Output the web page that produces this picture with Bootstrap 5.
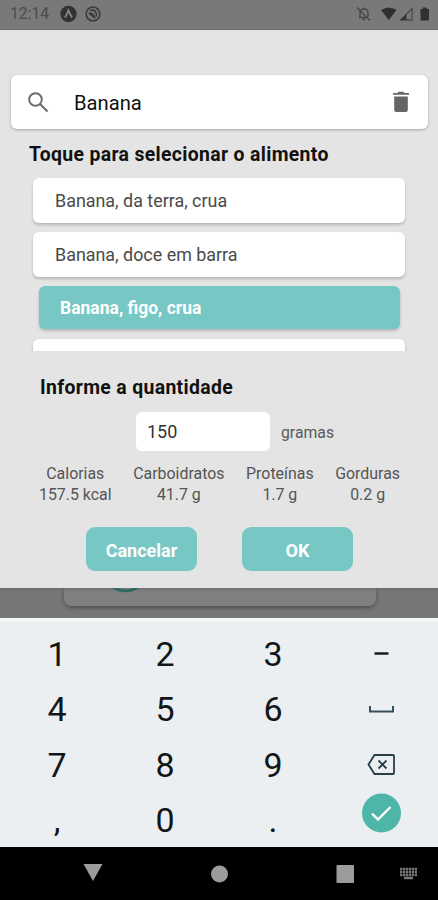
<!DOCTYPE html>
<html lang="pt-BR">
<head>
<meta charset="utf-8">
<meta name="viewport" content="width=device-width, initial-scale=1">
<title>Selecionar alimento</title>
<link href="https://cdn.jsdelivr.net/npm/bootstrap@5.3.0/dist/css/bootstrap.min.css" rel="stylesheet">
<style>
body{font-family:Roboto,sans-serif;color:#111;background:#777;width:438px;height:900px;overflow:hidden}
svg{display:block;flex:none}
.statusbar{height:30px;background:#797979;color:#4c4c4c;font-size:15.7px;padding:1px 6px 2px 10px;border-bottom:1px solid #707070}
.sheet{height:558px;background:#e4e4e4;padding-top:45px}
.search-box{height:54px;margin:0 10px 0 11px;border-radius:6px;background:#fff;box-shadow:0 1px 3px rgba(0,0,0,.28);padding:0 17px 0 16px}
.search-box input{font-size:20.2px;line-height:24px;height:24px;color:#111;outline:0;margin-left:24px;width:260px;padding-top:1px!important}
.sheet h2{font-size:19.4px;line-height:24px;font-weight:700;letter-spacing:.34px;white-space:nowrap}
#pick-title{margin:14px 0 11px 29px}
#amount-title{margin:25px 0 12px 40px}
.foods{height:173px;overflow:hidden;margin:0 20px;padding:0 13px}
.food{height:45px;margin-bottom:9px;border-radius:6px;background:#fff;box-shadow:0 2px 3px rgba(0,0,0,.2);padding:2px 22px 0;font-size:17.9px;color:#4a4a4a}
.food.chosen{height:43px;margin:0 5px 10px 6px;background:#77c7c4;color:#fff;font-weight:700;font-size:17.5px;padding-left:21px}
.amount-row{margin-bottom:12px}
.amount{width:134px;height:39px;border:0;border-radius:6px;padding:0 11px;font-size:18px;color:#333;margin-left:136px;background:#fff}
.unit{font-size:15.8px;color:#5a5a5a;margin-left:11px;padding-top:2px}
.facts{font-size:15.9px;line-height:21px;color:#555;padding-left:39px;padding-right:38px}
.actions{margin:22px 0 0 86px;gap:45px}
.action,.action:hover{width:111px;height:44px;border-radius:9px;background:#77c7c4;color:#fff;font-weight:700;font-size:18px;border:0;padding:2px 0 0}
.behind{height:30px;background:linear-gradient(#6c6c6c,#777 4px);overflow:hidden}
.behind-card{width:312px;height:18px;margin-left:64px;background:linear-gradient(#727272,#808080 4px);border-radius:0 0 8px 8px;box-shadow:0 2px 4px rgba(0,0,0,.35);padding-left:46px}
.keypad{height:229px;background:#eceff1;padding:5.5px 3px 0;border-top:3px solid #f5f7f6}
.keypad .col-3{height:55.6px;font-size:34px;line-height:55px;color:#111719}
.navkeys{height:53px;background:#000}
</style>
<script src="https://cdn.jsdelivr.net/npm/bootstrap@5.3.0/dist/js/bootstrap.bundle.min.js"></script>
</head>
<body>
<header class="statusbar d-flex align-items-center">
  <span>12:14</span>
  <svg class="ms-2" width="50" height="20" viewBox="0 0 50 20">
    <circle cx="11.500" cy="10" r="8.200" fill="#333"/><path d="M8 13.500q2-3 3.300-7 2 4 3.700 7" fill="none" stroke="#858585" stroke-width="1.900"/>
    <circle cx="36" cy="10" r="6.900" fill="none" stroke="#3b3b3b" stroke-width="1.500"/><path d="M33 6.500c4-1.500 7 1 6.500 6M32 9q4 0 6 5M32 9l6 5" fill="none" stroke="#3b3b3b" stroke-width="1.700"/>
  </svg>
  <svg class="ms-auto" width="76" height="20" viewBox="0 0 76 20">
    <g fill="none" stroke="#464646" stroke-width="1.300" transform="translate(-1.500 0)"><path d="M4.500 13.500h9M5.500 13V9q0-4 4-4t4 4v4M9.500 3.500V5M8 15.500h3M2.500 3.500l13 13"/></g>
    <path d="M25 6q7.700-5 15.500 0L32.800 16z" fill="#303030"/>
    <path d="M56 4.500v11.500H44.500z" fill="none" stroke="#4a4a4a" stroke-width="1.300"/><path d="M50.500 10v6h-6z" fill="#333"/>
    <path d="M64.500 5h2.200V3.500h4V5h2.300v11.500h-8.500z" fill="#303030"/>
  </svg>
</header>
<main class="sheet">
  <div class="search-box d-flex align-items-center">
    <svg width="23" height="23" viewBox="0 0 23 23" fill="none" stroke="#6a6a6a" stroke-width="1.900"><circle cx="8.500" cy="8.500" r="6.300"/><path d="M13 13l7.500 7.500"/></svg>
    <input class="border-0 p-0 bg-transparent" type="text" value="Banana" aria-label="Buscar">
    <svg class="ms-auto" width="20" height="22" viewBox="0 0 20 22" fill="#666"><path d="M2 2h4.500l1-1.300h5L13.500 2H18v1.800H2zM3.200 5.500h13.600V19q0 2-2 2H5.200q-2 0-2-2z"/></svg>
  </div>
  <h2 id="pick-title">Toque para selecionar o alimento</h2>
  <div class="foods">
    <div class="food d-flex align-items-center">Banana, da terra, crua</div>
    <div class="food d-flex align-items-center">Banana, doce em barra</div>
    <div class="food chosen d-flex align-items-center">Banana, figo, crua</div>
    <div class="food"></div>
  </div>
  <h2 id="amount-title">Informe a quantidade</h2>
  <div class="d-flex align-items-center amount-row">
    <input class="amount" type="text" value="150" aria-label="Quantidade"><span class="unit">gramas</span>
  </div>
  <div class="facts d-flex justify-content-between text-center">
    <div>Calorias<br>157.5 kcal</div><div>Carboidratos<br>41.7 g</div><div>Proteínas<br>1.7 g</div><div>Gorduras<br>0.2 g</div>
  </div>
  <div class="actions d-flex">
    <button class="btn action">Cancelar</button><button class="btn action">OK</button>
  </div>
</main>
<div class="behind"><div class="behind-card"><svg width="32" height="6" viewBox="0 0 32 6"><path d="M1-2Q16 8 30-2" fill="none" stroke="#27695f" stroke-width="2.500"/></svg></div></div>
<section class="keypad">
  <div class="row g-0 text-center">
    <div class="col-3">1</div><div class="col-3">2</div><div class="col-3">3</div><div class="col-3 d-flex align-items-center justify-content-center"><svg width="28" height="20" viewBox="0 0 28 20"><path d="M7.500 9.500h14" stroke="#111719" stroke-width="2.400"/></svg></div>
    <div class="col-3">4</div><div class="col-3">5</div><div class="col-3">6</div><div class="col-3 d-flex align-items-center justify-content-center"><svg width="28" height="20" viewBox="0 0 28 20"><path d="M3 6v5.500h23V6" fill="none" stroke="#34505a" stroke-width="2"/></svg></div>
    <div class="col-3">7</div><div class="col-3">8</div><div class="col-3">9</div><div class="col-3 d-flex align-items-center justify-content-center"><svg width="30" height="24" viewBox="0 0 30 24" fill="none" stroke="#263f4a" stroke-width="1.800"><path d="M8.500 2H27q1 0 1 1v17q0 1-1 1H8.500L2.500 11.500zM12.500 7.500l8 8M20.500 7.500l-8 8"/></svg></div>
    <div class="col-3">,</div><div class="col-3">0</div><div class="col-3">.</div><div class="col-3 d-flex justify-content-center"><svg width="40" height="40" viewBox="0 0 40 40"><circle cx="20.500" cy="20" r="19.500" fill="#4db6a8"/><path d="M11 20.500l6 6L29.500 14" fill="none" stroke="#fff" stroke-width="2.400"/></svg></div>
  </div>
</section>
<footer class="navkeys">
  <svg width="438" height="53" viewBox="0 0 438 53" fill="#9c9c9c"><path d="M83.500 17h19L93 34z"/><circle cx="219.500" cy="27" r="8.500"/><rect x="336.500" y="18" width="17.500" height="18" rx="1"/>
  <path d="M400 22h17M400 25h17M400 28h17" stroke="#777" stroke-width="2.300" stroke-dasharray="2.300 .7"/><path d="M404 31h9" stroke="#777" stroke-width="2.500"/></svg>
</footer>
</body>
</html>
